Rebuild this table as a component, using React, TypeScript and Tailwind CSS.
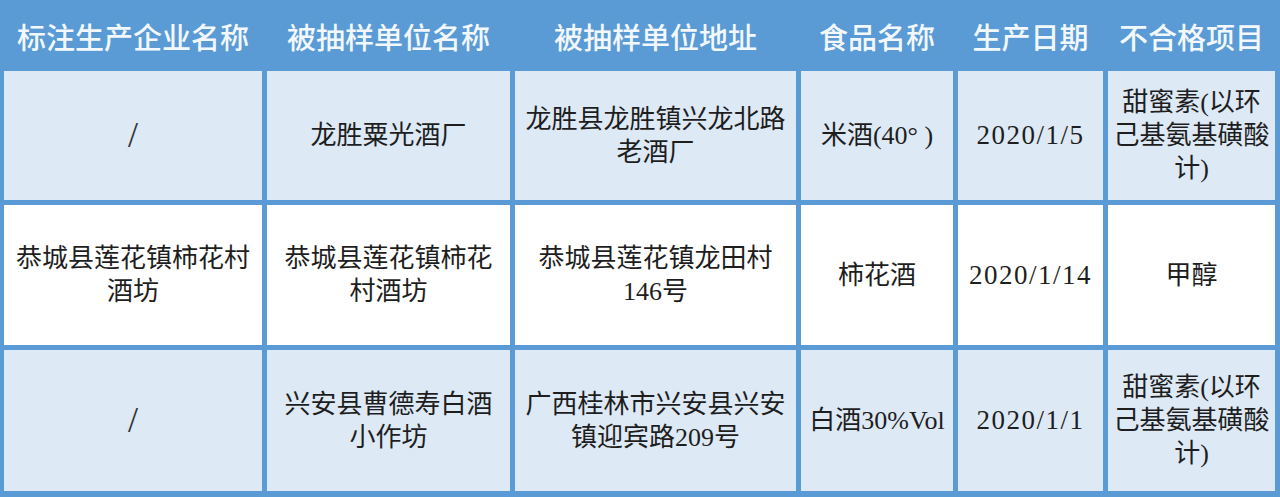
import React from "react";

const headers = ["标注生产企业名称", "被抽样单位名称", "被抽样单位地址", "食品名称", "生产日期", "不合格项目"];

type Row = { bg: string; cells: string[][] };

const rows: Row[] = [
  {
    bg: "bg-[#dde9f5]",
    cells: [
      ["/"],
      ["龙胜粟光酒厂"],
      ["龙胜县龙胜镇兴龙北路", "老酒厂"],
      ["米酒(40° )"],
      ["2020/1/5"],
      ["甜蜜素(以环", "己基氨基磺酸", "计)"],
    ],
  },
  {
    bg: "bg-white",
    cells: [
      ["恭城县莲花镇柿花村", "酒坊"],
      ["恭城县莲花镇柿花", "村酒坊"],
      ["恭城县莲花镇龙田村", "146号"],
      ["柿花酒"],
      ["2020/1/14"],
      ["甲醇"],
    ],
  },
  {
    bg: "bg-[#dde9f5]",
    cells: [
      ["/"],
      ["兴安县曹德寿白酒", "小作坊"],
      ["广西桂林市兴安县兴安", "镇迎宾路209号"],
      ["白酒30%Vol"],
      ["2020/1/1"],
      ["甜蜜素(以环", "己基氨基磺酸", "计)"],
    ],
  },
];

export default function App() {
  return (
    <div className="w-[1280px] h-[497px] bg-[#5b9bd5] overflow-hidden">
      <div className="grid grid-cols-[258px_243px_281px_152px_145px_167px] grid-rows-[66px_129px_140px_141px] gap-[5px] pl-[4px] pr-[5px] pb-[6px]">
        {headers.map((h) => (
          <div
            key={h}
            className="flex items-center justify-center pt-[7px] whitespace-nowrap text-[29px] font-medium text-[#f2f8fd] leading-none"
            style={{ fontFamily: '"Noto Sans CJK SC", sans-serif' }}
          >
            {h}
          </div>
        ))}
        {rows.map((r, ri) =>
          r.cells.map((lines, ci) => {
            const isSlash = lines.length === 1 && lines[0] === "/";
            const isDate = ci === 4;
            return (
              <div
                key={`${ri}-${ci}`}
                className={`${r.bg} flex flex-col items-center justify-center text-center leading-[33px] text-[#1e1e1e] whitespace-nowrap ${
                  isSlash ? "text-[36px] font-thin text-[#333333]" : "text-[26px]"
                } ${isDate ? "text-[27px] tracking-[1.5px]" : ""}`}
                style={{ fontFamily: '"Liberation Serif", "Noto Sans CJK SC", serif' }}
              >
                {lines.map((l, li) => (
                  <span key={li}>{l}</span>
                ))}
              </div>
            );
          })
        )}
      </div>
    </div>
  );
}
